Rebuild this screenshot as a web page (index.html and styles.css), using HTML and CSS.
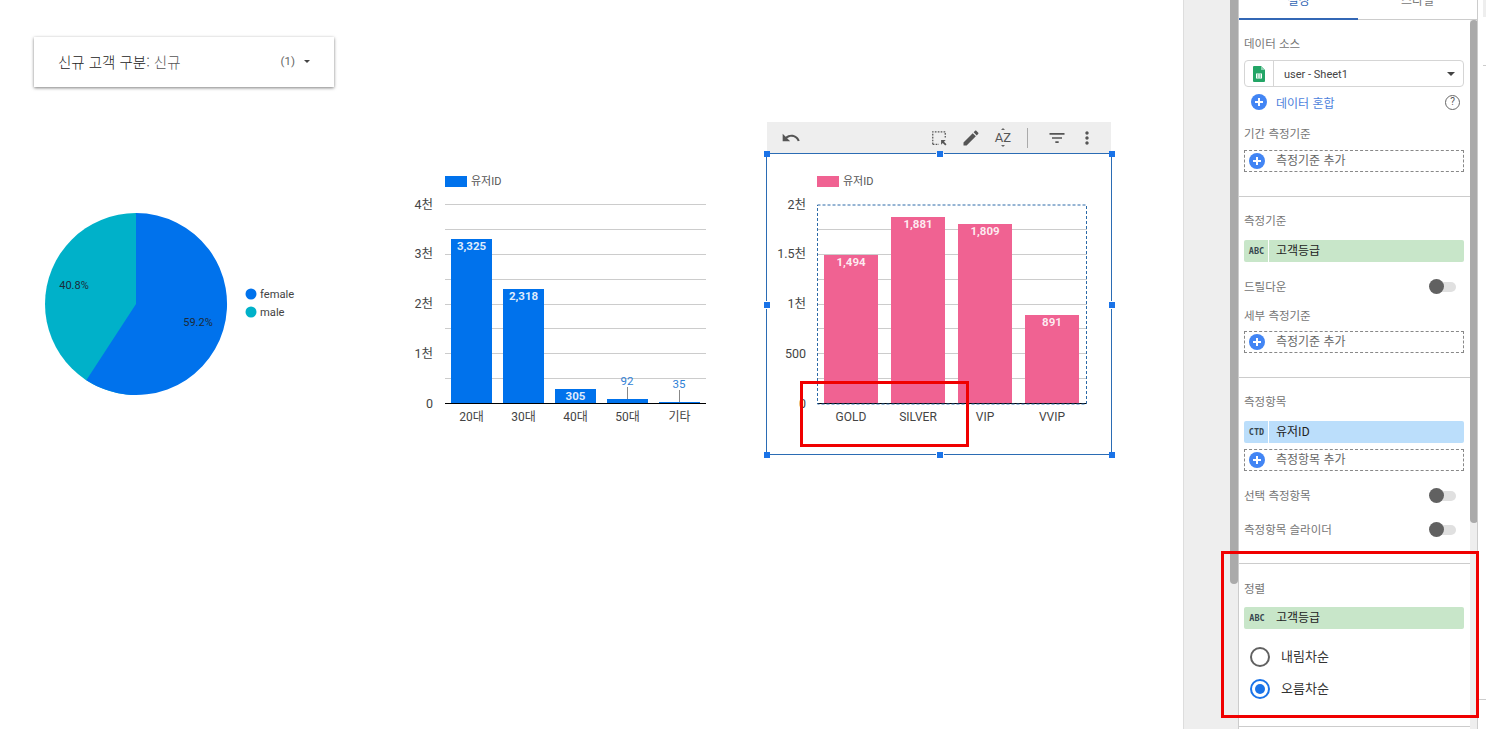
FILE: index.html
```html
<!DOCTYPE html>
<html lang="ko">
<head>
  <meta charset="UTF-8">
  <meta name="viewport" content="width=device-width, initial-scale=1.0">
  <title>Report editor</title>
  <link rel="stylesheet" href="styles.css">
</head>
<body>
  <div class="page">
    <main class="canvas">
      <div class="filter-card">
        <span class="filter-name">신규 고객 구분<span class="filter-value">: 신규</span></span>
        <span class="filter-count">(1)</span>
        <span class="caret"></span>
      </div>

      <!-- pie -->
      <svg class="chart chart-pie" viewBox="30 200 280 205">
        <path class="fill-teal" d="M136 304 L136 213 A91 91 0 1 0 136 395 Z"/>
        <path class="fill-blue" d="M136 304 L136 213 A91 91 0 1 1 86.3 380.2 Z"/>
        <text class="pie-label" x="198" y="326" text-anchor="middle">59.2%</text>
        <text class="pie-label" x="74" y="289" text-anchor="middle">40.8%</text>
        <circle class="fill-blue" cx="251" cy="294" r="5.5"/>
        <circle class="fill-teal" cx="251" cy="312" r="5.5"/>
        <text class="pie-legend" x="260" y="298">female</text>
        <text class="pie-legend" x="260" y="316">male</text>
      </svg>

      <!-- age bars -->
      <svg class="chart chart-age" viewBox="400 165 320 270">
        <rect class="fill-blue" x="445" y="176" width="22" height="11"/>
        <text class="legend" x="471" y="185">유저ID</text>
        <g class="grid">
          <path d="M445 204.5H706M445 229.5H706M445 254.5H706M445 279.5H706M445 304.5H706M445 328.5H706M445 353.5H706M445 378.5H706"/>
        </g>
        <g class="axis-y" text-anchor="end">
          <text x="433" y="209">4천</text>
          <text x="433" y="258">3천</text>
          <text x="433" y="308">2천</text>
          <text x="433" y="358">1천</text>
          <text x="433" y="408">0</text>
        </g>
        <rect class="fill-blue" x="451" y="239" width="41" height="164"/>
        <rect class="fill-blue" x="503" y="289" width="41" height="114"/>
        <rect class="fill-blue" x="555" y="389" width="41" height="14"/>
        <rect class="fill-blue" x="607" y="399" width="41" height="4"/>
        <rect class="fill-blue" x="659" y="402" width="41" height="1"/>
        <path class="leader" d="M627.5 387V399M679.5 390V402"/>
        <path class="baseline" d="M445 403.5H706"/>
        <g class="bar-value" text-anchor="middle">
          <text x="471.5" y="250">3,325</text>
          <text x="523.5" y="300">2,318</text>
          <text x="575.5" y="400">305</text>
        </g>
        <g class="bar-value-out" text-anchor="middle">
          <text x="627" y="385">92</text>
          <text x="679" y="388">35</text>
        </g>
        <g class="axis-x" text-anchor="middle">
          <text x="471.5" y="421">20대</text>
          <text x="523.5" y="421">30대</text>
          <text x="575.5" y="421">40대</text>
          <text x="627.5" y="421">50대</text>
          <text x="679.5" y="421">기타</text>
        </g>
      </svg>

      <!-- selected chart -->
      <div class="chart-toolbar">
        <svg class="tool" viewBox="0 0 24 24"><path d="M12.5 8c-2.65 0-5.05.99-6.9 2.6L2 7v9h9l-3.62-3.62c1.39-1.16 3.16-1.88 5.12-1.88 3.54 0 6.55 2.31 7.6 5.5l2.37-.78C21.08 11.03 17.15 8 12.5 8z"/></svg>
        <span class="tool-space"></span>
        <svg class="tool" viewBox="0 0 24 24"><path class="tool-dash" d="M4.5 19.500V4.500H19.500V12M4.500 19.500H12"/><path d="M14.500 14.500H20L18 16.500L21 19.500L19.500 21L16.500 18L14.500 20Z"/></svg>
        <svg class="tool" viewBox="0 0 24 24"><path d="M3 17.250V21h3.750L17.810 9.940l-3.750-3.750L3 17.250zM20.710 7.040c.39-.39.39-1.020 0-1.410l-2.340-2.340c-.39-.39-1.020-.39-1.410 0l-1.830 1.830 3.750 3.750 1.830-1.830z"/></svg>
        <span class="tool-az">AZ</span>
        <span class="tool-sep"></span>
        <svg class="tool" viewBox="0 0 24 24"><path d="M10 18h4v-2h-4v2zM3 6v2h18V6H3zm3 7h12v-2H6v2z"/></svg>
        <svg class="tool tool-more" viewBox="0 0 24 24"><path d="M12 8c1.100 0 2-.9 2-2s-.9-2-2-2-2 .9-2 2 .9 2 2 2zm0 2c-1.100 0-2 .9-2 2s.9 2 2 2 2-.9 2-2-.9-2-2-2zm0 6c-1.100 0-2 .9-2 2s.9 2 2 2 2-.9 2-2-.9-2-2-2z"/></svg>
      </div>

      <svg class="chart chart-grade" viewBox="760 145 360 320">
        <!-- selection frame -->
        <path class="frame" d="M766.500 153.500H936M944 153.500H1111.500V301M1111.500 309V454.500H944M936 454.500H766.500V309M766.500 301V153.500"/>
        <g class="handle">
          <rect x="764" y="151" width="6" height="6"/>
          <rect x="937" y="151" width="6" height="6"/>
          <rect x="1109" y="151" width="6" height="6"/>
          <rect x="764" y="302" width="6" height="6"/>
          <rect x="1109" y="302" width="6" height="6"/>
          <rect x="764" y="452" width="6" height="6"/>
          <rect x="937" y="452" width="6" height="6"/>
          <rect x="1109" y="452" width="6" height="6"/>
        </g>
        <rect class="fill-pink" x="817" y="176" width="22" height="11"/>
        <text class="legend" x="843" y="185">유저ID</text>
        <g class="grid">
          <path d="M817 229.500H1087M817 254.500H1087M817 279.500H1087M817 304.500H1087M817 328.500H1087M817 353.500H1087M817 378.500H1087"/>
        </g>
        <g class="axis-y" text-anchor="end">
          <text x="806" y="209">2천</text>
          <text x="806" y="258">1.5천</text>
          <text x="806" y="308">1천</text>
          <text x="806" y="358">500</text>
          <text x="806" y="408">0</text>
        </g>
        <rect class="fill-pink" x="824" y="255" width="54" height="148"/>
        <rect class="fill-pink" x="891" y="217" width="54" height="186"/>
        <rect class="fill-pink" x="958" y="224" width="54" height="179"/>
        <rect class="fill-pink" x="1025" y="315" width="54" height="88"/>
        <path class="baseline" d="M817 403.500H1087"/>
        <rect class="plot-dash" x="817.500" y="205" width="269" height="199"/>
        <g class="bar-value" text-anchor="middle">
          <text x="851" y="266">1,494</text>
          <text x="918" y="228">1,881</text>
          <text x="985" y="235">1,809</text>
          <text x="1052" y="326">891</text>
        </g>
        <g class="axis-x" text-anchor="middle">
          <text x="851" y="421">GOLD</text>
          <text x="918" y="421">SILVER</text>
          <text x="985" y="421">VIP</text>
          <text x="1052" y="421">VVIP</text>
        </g>
      </svg>

      <div class="mark mark-axis"></div>
    </main>

    <div class="gutter"></div>
    <div class="left-scroll"><div class="left-thumb"></div></div>

    <aside class="panel">
      <div class="tabs">
        <div class="tab tab-active">설정</div>
        <div class="tab">스타일</div>
      </div>
      <div class="panel-body">
        <div class="panel-content">
          <section class="group">
            <div class="label">데이터 소스</div>
            <div class="source">
              <span class="source-icon">
                <svg width="12" height="16" viewBox="0 0 12 16">
                  <path class="sheet" d="M1 0H8L12 4V15A1 1 0 0 1 11 16H1A1 1 0 0 1 0 15V1A1 1 0 0 1 1 0Z"/>
                  <path class="sheet-fold" d="M8 0L12 4H8Z"/>
                  <path class="sheet-cells" d="M3 7.500H9V12.500H3ZM4 8.500V9.500H5.500V8.500ZM6.500 8.500V9.500H8V8.500ZM4 10.500V11.500H5.500V10.500ZM6.500 10.500V11.500H8V10.500Z"/>
                </svg>
              </span>
              <span class="source-name">user - Sheet1</span>
              <span class="source-caret"></span>
            </div>
            <div class="blend">
              <span class="plus"></span>
              <span class="blend-text">데이터 혼합</span>
              <span class="help">?</span>
            </div>
            <div class="label label-date">기간 측정기준</div>
            <div class="add add-first"><span class="plus"></span><span class="add-text">측정기준 추가</span></div>
          </section>

          <section class="group">
            <div class="label">측정기준</div>
            <div class="chip chip-green"><span class="chip-type">ABC</span><span class="chip-name">고객등급</span></div>
            <div class="switch-row switch-drill"><span class="label">드릴다운</span><span class="switch"></span></div>
            <div class="label label-sub">세부 측정기준</div>
            <div class="add add-first"><span class="plus"></span><span class="add-text">측정기준 추가</span></div>
          </section>

          <section class="group group-metric">
            <div class="label">측정항목</div>
            <div class="chip chip-blue"><span class="chip-type">CTD</span><span class="chip-name">유저ID</span></div>
            <div class="add add-metric"><span class="plus"></span><span class="add-text">측정항목 추가</span></div>
            <div class="switch-row switch-drill"><span class="label">선택 측정항목</span><span class="switch"></span></div>
            <div class="switch-row switch-slider"><span class="label">측정항목 슬라이더</span><span class="switch"></span></div>
          </section>

          <section class="group group-sort">
            <div class="label">정렬</div>
            <div class="chip chip-green chip-plain"><span class="chip-type">ABC</span><span class="chip-name">고객등급</span></div>
            <div class="radio-row radio-first"><span class="radio"></span><span class="radio-text">내림차순</span></div>
            <div class="radio-row radio-next"><span class="radio radio-on"></span><span class="radio-text">오름차순</span></div>
          </section>
        </div>
        <div class="right-scroll"><div class="right-thumb"></div></div>
      </div>
    </aside>

    <div class="edge">
      <div class="edge-tab"></div>
      <div class="edge-line"></div>
      <div class="edge-line edge-line-long"></div>
    </div>

    <div class="mark mark-sort"></div>
  </div>
</body>
</html>
```

FILE: styles.css
```css
* {
  box-sizing: border-box;
}
html, body {
  margin: 0;
  height: 100%;
  overflow: hidden;
  background: #fff;
}
body {
  font-family: "Noto Sans CJK KR", Roboto, sans-serif;
  font-size: 12px;
  color: #333;
}
.page {
  position: relative;
  display: flex;
  width: 1486px;
  height: 729px;
  overflow: hidden;
}

/* report canvas */
.canvas {
  position: relative;
  width: 1183px;
  height: 100%;
  flex: none;
}
.filter-card {
  position: absolute;
  left: 34px;
  top: 37px;
  width: 300px;
  height: 50px;
  display: flex;
  align-items: center;
  padding: 0 24px 2px 24px;
  background: #fff;
  box-shadow: 0 1px 3px rgba(0, 0, 0, 0.5);
}
.filter-name {
  flex: 1;
  font-size: 14.500px;
  font-weight: 300;
  color: #222;
}
.filter-value {
  color: #555;
}
.filter-count {
  font-family: Roboto, sans-serif;
  font-size: 11.500px;
  color: #666;
  margin-right: 9px;
}
.caret {
  border: 3px solid transparent;
  border-top: 3px solid #444;
  border-bottom: 0;
}

.chart {
  position: absolute;
  display: block;
}
.chart text {
  font-family: Roboto, "Noto Sans CJK KR", sans-serif;
}
.chart-pie {
  left: 30px;
  top: 200px;
  width: 280px;
  height: 205px;
}
.chart-age {
  left: 400px;
  top: 165px;
  width: 320px;
  height: 270px;
}
.chart-grade {
  left: 760px;
  top: 145px;
  width: 360px;
  height: 320px;
}
.fill-blue {
  fill: #0072ec;
}
.fill-teal {
  fill: #00b1c9;
}
.fill-pink {
  fill: #f06292;
}
.pie-label {
  font-size: 11px;
  fill: #1c2b3a;
}
.pie-legend {
  font-size: 11.200px;
  fill: #444;
}
.legend {
  font-size: 11px;
  fill: #555;
}
.grid path {
  fill: none;
  stroke: #ccc;
  stroke-width: 1;
}
.axis-y text {
  font-size: 12.500px;
  fill: #444;
}
.axis-x text {
  font-size: 12px;
  fill: #444;
}
.baseline {
  fill: none;
  stroke: #000;
  stroke-width: 1;
}
.leader {
  fill: none;
  stroke: #888;
  stroke-width: 1;
}
.bar-value text {
  font-size: 11.500px;
  font-weight: 700;
  fill: #fff;
  fill-opacity: 0.88;
}
.bar-value-out text {
  font-size: 11.500px;
  fill: #2f7fd6;
}
.plot-dash {
  fill: none;
  stroke: #2c6aa8;
  stroke-width: 1;
  stroke-dasharray: 3 2;
}
.frame {
  fill: none;
  stroke: #2b6cb4;
  stroke-width: 1;
}
.handle rect {
  fill: #1a73e8;
}

.chart-toolbar {
  position: absolute;
  left: 767px;
  top: 122px;
  width: 344px;
  height: 31px;
  display: flex;
  align-items: center;
  padding: 0 14px 0 14px;
  background: #eee;
}
.tool {
  width: 20px;
  height: 20px;
  flex: none;
  fill: #555;
}
.tool + .tool {
  margin-left: 12px;
}
.tool + .tool-more {
  margin-left: 10px;
}
.tool-dash {
  fill: none;
  stroke: #555;
  stroke-width: 1.500;
  stroke-dasharray: 2 1.500;
}
.tool-space {
  flex: 1;
}
.tool-az {
  position: relative;
  width: 20px;
  margin-left: 12px;
  text-align: center;
  font-family: Roboto, sans-serif;
  font-size: 13px;
  line-height: 13px;
  color: #555;
}
.tool-az::before,
.tool-az::after {
  content: "";
  position: absolute;
  left: 8px;
  border: 2px solid transparent;
}
.tool-az::before {
  top: -3px;
  border-top: 0;
  border-bottom: 2px solid #666;
}
.tool-az::after {
  bottom: -3px;
  border-bottom: 0;
  border-top: 2px solid #666;
}
.tool-sep {
  width: 1px;
  height: 20px;
  margin: 0 19px 0 14px;
  background: #aaa;
}

/* red annotation boxes */
.mark {
  position: absolute;
  border: 3px solid #f00000;
}
.mark-axis {
  left: 800px;
  top: 381px;
  width: 169px;
  height: 66px;
}
.mark-sort {
  left: 1221px;
  top: 551px;
  width: 258px;
  height: 167px;
}

/* side rails */
.gutter {
  width: 47px;
  flex: none;
  background: #eee;
  border-left: 1px solid #ddd;
}
.left-scroll {
  width: 9px;
  flex: none;
  background: #eee;
  border-right: 1px solid #ccc;
}
.left-thumb {
  width: 8px;
  height: 584px;
  background: #aaa;
  border-radius: 0 0 4px 4px;
}

/* properties panel */
.panel {
  width: 239px;
  flex: none;
  display: flex;
  flex-direction: column;
  overflow: hidden;
  border-right: 1px solid #ccc;
}
.tabs {
  display: flex;
  height: 20px;
  flex: none;
  border-bottom: 1px solid #ccc;
}
.tab {
  flex: 1;
  display: flex;
  justify-content: center;
  align-items: flex-end;
  padding-bottom: 9px;
  line-height: 20px;
  color: #777;
}
.tab-active {
  color: #3367b5;
  border-bottom: 2px solid #3367b5;
  height: 20px;
  padding-bottom: 8px;
}
.panel-body {
  display: flex;
  flex: 1;
  min-height: 0;
}
.panel-content {
  width: 231px;
  flex: none;
}
.right-scroll {
  width: 7px;
  flex: none;
  background: #eee;
}
.right-thumb {
  width: 8px;
  height: 503px;
  margin-top: 0;
  background: #aaa;
  border-radius: 4px;
}

.group {
  padding: 15px 6px 24px 5px;
  border-bottom: 1px solid #ccc;
}
.group-metric {
  padding-bottom: 26px;
}
.group-sort {
  padding-top: 16px;
  padding-bottom: 25px;
}
.label {
  height: 16px;
  line-height: 16px;
  font-size: 11.500px;
  color: #757575;
}
.label-date {
  margin-top: 13px;
}
.label-sub {
  margin-top: 13px;
}

.source {
  display: flex;
  align-items: center;
  height: 27px;
  margin-top: 9px;
  border: 1px solid #d5d5d5;
  border-radius: 4px;
}
.source-icon {
  display: flex;
  justify-content: center;
  align-items: center;
  width: 29px;
  height: 100%;
  border-right: 1px solid #d5d5d5;
}
.sheet {
  fill: #23a566;
}
.sheet-fold {
  fill: #8ed1b1;
}
.sheet-cells {
  fill: #fff;
  fill-rule: evenodd;
}
.source-name {
  flex: 1;
  margin-left: 10px;
  padding-top: 2px;
  font-family: Roboto, sans-serif;
  font-size: 11px;
  color: #444;
}
.source-caret {
  margin-right: 8px;
  border: 4px solid transparent;
  border-top: 4px solid #444;
  border-bottom: 0;
}

.plus {
  position: relative;
  display: inline-block;
  flex: none;
  width: 16px;
  height: 16px;
  border-radius: 50%;
  background: #4285f4;
}
.plus::before,
.plus::after {
  content: "";
  position: absolute;
  background: #fff;
}
.plus::before {
  left: 4px;
  top: 7px;
  width: 8px;
  height: 2px;
}
.plus::after {
  left: 7px;
  top: 4px;
  width: 2px;
  height: 8px;
}
.blend {
  display: flex;
  align-items: center;
  height: 20px;
  margin-top: 5px;
  padding-left: 7px;
}
.blend-text {
  flex: 1;
  margin-left: 9px;
  color: #4d7fdc;
  font-size: 12px;
}
.help {
  width: 15px;
  height: 15px;
  margin-right: 4px;
  border: 1.500px solid #666;
  border-radius: 50%;
  text-align: center;
  line-height: 12px;
  font-family: Roboto, sans-serif;
  font-size: 10px;
  color: #555;
}
.add {
  display: flex;
  align-items: center;
  height: 22px;
  padding-left: 4px;
  border: 1px dashed #888;
  font-size: 12px;
  color: #666;
}
.add .plus {
  margin-right: 11px;
  margin-top: -1px;
}
.add-text {
  padding-bottom: 4px;
}
.add-first {
  margin-top: 9px;
}
.group .label-sub + .add-first {
  margin-top: 8px;
}
.add-metric {
  margin-top: 6px;
}

.chip {
  display: flex;
  align-items: center;
  height: 22px;
  margin-top: 12px;
  border-radius: 2px;
}
.chip-green {
  background: #c8e6c9;
}
.chip-blue {
  background: #bbdefb;
}
.chip-plain {
  margin-top: 11px;
}
.chip-type {
  width: 25px;
  height: 100%;
  padding-left: 1px;
  line-height: 22px;
  text-align: center;
  border-right: 1px solid #fff;
  font-family: "DejaVu Sans Mono", monospace;
  font-size: 8.500px;
  font-weight: 700;
  color: #37474f;
}
.chip-plain .chip-type {
  border-right: 0;
}
.chip-name {
  margin-left: 7px;
  padding-bottom: 4px;
  font-size: 12px;
  color: #222;
}

.switch-row {
  display: flex;
  justify-content: space-between;
  align-items: center;
  height: 16px;
}
.switch-drill {
  margin-top: 16px;
}
.switch-slider {
  margin-top: 18px;
}
.switch {
  position: relative;
  top: 1px;
  width: 20px;
  height: 10px;
  margin-right: 8px;
  border-radius: 5px;
  background: #e0e0e0;
}
.switch::before {
  content: "";
  position: absolute;
  left: -7px;
  top: -3px;
  width: 15px;
  height: 15px;
  border-radius: 50%;
  background: #616161;
}

.radio-row {
  display: flex;
  align-items: center;
  height: 24px;
  padding-left: 6px;
  color: #333;
}
.radio-text {
  padding-bottom: 4px;
  font-size: 13px;
}
.radio-first {
  margin-top: 16px;
}
.radio-next {
  margin-top: 8px;
}
.radio {
  position: relative;
  width: 20px;
  height: 20px;
  margin-right: 11px;
  border: 2px solid #616161;
  border-radius: 50%;
}
.radio-on {
  border-color: #1a73e8;
}
.radio-on::before {
  content: "";
  position: absolute;
  left: 3px;
  top: 3px;
  width: 10px;
  height: 10px;
  border-radius: 50%;
  background: #1a73e8;
}

/* sliver of the next pane */
.edge {
  flex: 1;
}
.edge-tab {
  width: 3px;
  height: 17px;
  margin-left: 5px;
  background: #eee;
}
.edge-line {
  height: 1px;
  margin-top: 48px;
  margin-left: 5px;
  background: #ccc;
}
.edge-line-long {
  margin-top: 633px;
  margin-left: 0;
}
```
